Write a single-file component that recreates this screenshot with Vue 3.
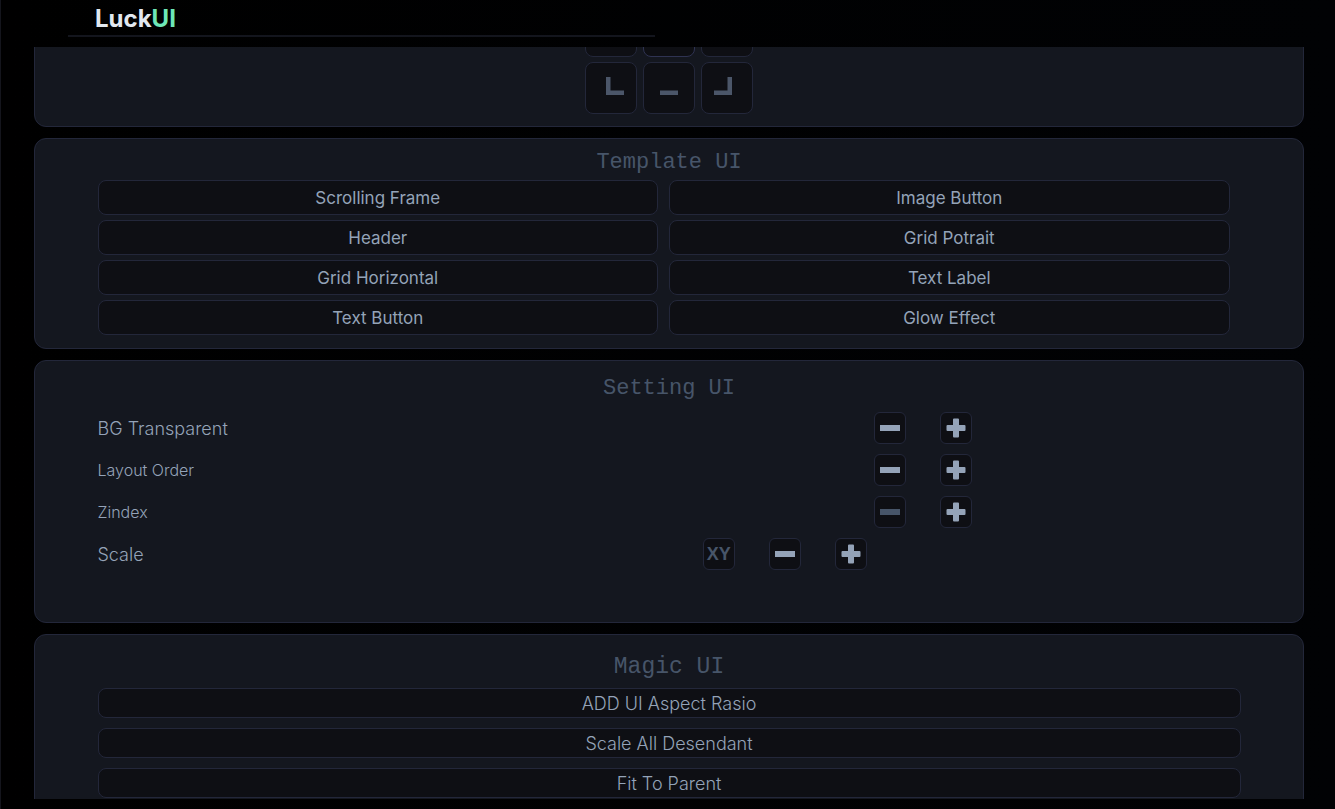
<script setup>
const templates = [
  'Scrolling Frame', 'Image Button',
  'Header', 'Grid Potrait',
  'Grid Horizontal', 'Text Label',
  'Text Button', 'Glow Effect',
]

const settings = [
  { label: 'BG Transparent', size: 'large' },
  { label: 'Layout Order', size: 'small' },
  { label: 'Zindex', size: 'small', minDisabled: true },
  { label: 'Scale', size: 'large', axis: 'XY' },
]

const magic = ['ADD UI Aspect Rasio', 'Scale All Desendant', 'Fit To Parent']

const anchors = [
  { name: 'Left', d: 'M0 0h4v18h-4z' },
  { name: 'Center', d: 'M7 7h4v4h-4z', active: true },
  { name: 'Right', d: 'M14 0h4v18h-4z' },
  { name: 'Bottom left', d: 'M0 0h4.500v13.5h13.500v4.5H0z', side: 'left' },
  { name: 'Bottom', d: 'M0 13.5h18v4.5H0z' },
  { name: 'Bottom right', d: 'M13.500 0h4.500v18H0v-4.500h13.500z', side: 'right' },
]
</script>

<template>
  <div class="page">
    <header class="header">
      <h1 class="logo">Luck<span>UI</span></h1>
    </header>

    <main class="content">
      <section class="panel anchor-panel" aria-label="Anchor">
        <div class="anchors">
          <button
            v-for="a in anchors"
            :key="a.name"
            type="button"
            class="btn anchor"
            :class="[a.side, { active: a.active }]"
            :aria-label="a.name"
          >
            <svg width="18" height="18" viewBox="0 0 18 18"><path :d="a.d" /></svg>
          </button>
        </div>
      </section>

      <section class="panel template-panel">
        <h2 class="title">Template UI</h2>
        <div class="template-grid">
          <button v-for="t in templates" :key="t" type="button" class="btn template">{{ t }}</button>
        </div>
      </section>

      <section class="panel setting-panel">
        <h2 class="title">Setting UI</h2>
        <div class="settings">
          <div
            v-for="s in settings"
            :key="s.label"
            class="setting"
            :class="[s.size, { scale: s.axis }]"
            role="group"
            :aria-label="s.label"
          >
            <span class="label">{{ s.label }}</span>
            <button v-if="s.axis" type="button" class="btn step axis">{{ s.axis }}</button>
            <button type="button" class="btn step" :disabled="s.minDisabled" aria-label="Decrease">
              <svg width="20" height="20" viewBox="0 0 20 20"><path d="M0 7h20v6H0z" /></svg>
            </button>
            <button type="button" class="btn step" aria-label="Increase">
              <svg width="20" height="20" viewBox="0 0 20 20">
                <path d="M8 .5h4q1 0 1 1V7h5.500q1 0 1 1v4q0 1-1 1H13v5.500q0 1-1 1H8q-1 0-1-1V13H1.500q-1 0-1-1V8q0-1 1-1H7V1.500q0-1 1-1z" />
              </svg>
            </button>
          </div>
        </div>
      </section>

      <section class="panel magic-panel">
        <h2 class="title magic-title">Magic UI</h2>
        <div class="magic-list">
          <button v-for="m in magic" :key="m" type="button" class="btn magic">{{ m }}</button>
        </div>
      </section>
    </main>
  </div>
</template>

<style>
body {
  margin: 0;
  background: #000;
}
</style>

<style scoped>
.page {
  box-sizing: border-box;
  height: 100vh;
  display: flex;
  flex-direction: column;
  padding-bottom: 10px;
  border-left: 1px solid #14151c;
  background: linear-gradient(90deg, #000, #010204);
  overflow: hidden;
  font-family: Inter, "Liberation Sans", sans-serif;
}

.header {
  box-sizing: border-box;
  flex: none;
  width: 44%;
  height: 37px;
  margin: 0 0 10px 67px;
  padding-left: 27px;
  border-bottom: 2px solid #13151d;
}

.logo {
  margin: 0;
  font-size: 24px;
  line-height: 38px;
  font-weight: 700;
  color: #e2e8f0;
}

.logo span {
  color: #6ee7b7;
}

.content {
  flex: 1;
  min-height: 0;
  display: flex;
  flex-direction: column;
  gap: 11px;
  padding: 0 31px 0 33px;
  overflow: hidden;
}

.panel {
  box-sizing: border-box;
  flex: none;
  padding: 0 calc(5% - 1px);
  border: 1px solid #23273a;
  border-radius: 12px;
  background: #14171f;
}

.anchor-panel {
  margin-top: -50px;
  padding-top: 7px;
  padding-bottom: 12px;
}

.anchors {
  display: grid;
  grid-template-columns: repeat(3, 52px);
  justify-content: center;
  gap: 5px 6px;
}

.btn {
  box-sizing: border-box;
  display: flex;
  align-items: center;
  justify-content: center;
  margin: 0;
  padding: 0;
  border: 1px solid #23273a;
  border-radius: 8px;
  background: #0e0f14;
  color: #94a3b8;
  font: inherit;
}

.btn svg {
  display: block;
  fill: currentColor;
}

.anchor {
  height: 52px;
  padding-bottom: 4px;
  color: #4b5669;
}

.anchor.active {
  border-color: #2f3352;
}

.anchor.left {
  padding-left: 8px;
}

.anchor.right {
  padding-right: 8px;
}

.title {
  margin: 0;
  font-family: "Liberation Mono", monospace;
  font-size: 22px;
  font-weight: 400;
  text-align: center;
  color: #475569;
}

.template-panel {
  padding-top: 7px;
  padding-bottom: 13px;
}

.template-panel .title {
  line-height: 34px;
}

.template-grid {
  display: grid;
  grid-template-columns: 1fr 1fr;
  gap: 5px 11px;
  margin-right: 11px;
}

.template {
  height: 35px;
  font-size: 17px;
}

.setting-panel {
  padding-top: 8px;
  padding-bottom: 52px;
}

.setting-panel .title {
  line-height: 40px;
  padding-bottom: 3px;
}

.settings {
  display: flex;
  flex-direction: column;
  gap: 10px;
}

.setting {
  display: flex;
  align-items: center;
  gap: 34px;
  padding-right: 23.500%;
  font-weight: 300;
  color: #94a3b8;
}

.setting.scale {
  padding-right: 32.700%;
}

.setting.large {
  font-size: 18px;
}

.setting.small {
  font-size: 16px;
}

.label {
  flex: 1;
}

.step {
  width: 32px;
  height: 32px;
  border-radius: 6px;
}

.step:disabled {
  color: #475569;
}

.axis {
  font-family: "Liberation Sans", sans-serif;
  font-size: 18px;
  font-weight: 700;
  color: #475569;
}

.magic-panel {
  padding-top: 11px;
  padding-bottom: 20px;
}

.magic-title {
  font-size: 23px;
  line-height: 42px;
}

.magic-list {
  display: flex;
  flex-direction: column;
  gap: 10px;
}

.magic {
  height: 30px;
  font-size: 18px;
  font-weight: 300;
}
</style>
